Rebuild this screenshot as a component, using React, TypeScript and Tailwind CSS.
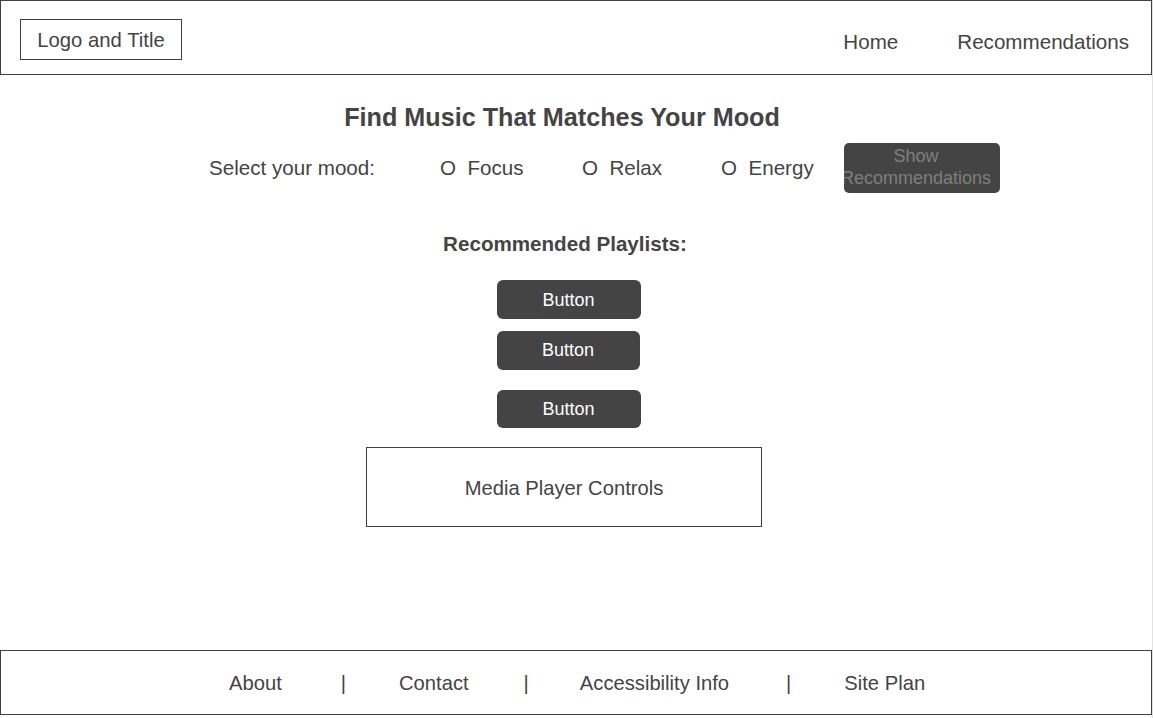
const footerLinks = [
  { label: 'About', bar: '' },
  { label: 'Contact', bar: 'ml-[59px] mr-[53px]' },
  { label: 'Accessibility Info', bar: 'ml-[55px] mr-[51px]' },
  { label: 'Site Plan', bar: 'ml-[57px] mr-[53px]' },
];

export default function App() {
  return (
    <div
      className="flex h-[718px] w-[1153px] flex-col border-r border-[#e2e2e2] bg-white text-[#444]"
      style={{ fontFamily: '"Liberation Sans", Arial, sans-serif' }}
    >
      {/* header */}
      <header className="flex h-[75px] items-start border border-[#404040]">
        <div className="ml-[19px] mt-[18px] flex h-[41px] w-[162px] items-center justify-center border border-[#404040] pt-[2px] text-[20.3px]">
          Logo and Title
        </div>
        <nav className="ml-auto mr-[22px] mt-[29px] flex gap-[59px] text-[20.6px] leading-[23px]">
          <span>Home</span>
          <span>Recommendations</span>
        </nav>
      </header>

      {/* main */}
      <main className="flex flex-1 flex-col">
        <h1 className="mt-[28px] w-[1124px] text-center text-[25.2px] font-bold leading-[28px]">
          Find Music That Matches Your Mood
        </h1>

        <div className="mt-[12px] flex items-center pl-[209px] text-[20.6px] leading-[23px]">
          <span className="mb-[2px] w-[166px] whitespace-nowrap">Select your mood:</span>
          <div className="mb-[2px] ml-[65px] flex">
            <span className="w-[142px] whitespace-pre">O  Focus</span>
            <span className="w-[139px] whitespace-pre">O  Relax</span>
            <span className="w-[123px] whitespace-pre">O  Energy</span>
          </div>
          <button className="flex h-[50px] w-[156px] flex-col items-center justify-center overflow-hidden rounded-[5px] bg-[#444] pb-[2px] pr-[12px] text-[18px] leading-[22px] text-[#7f7f7f]">
            <span className="whitespace-nowrap">Show</span>
            <span className="whitespace-nowrap">Recommendations</span>
          </button>
        </div>

        <div className="flex w-[1130px] flex-col items-center">
          <h2 className="mt-[39px] text-[20.6px] font-bold leading-[24px]">Recommended Playlists:</h2>
          <div className="ml-[7px] mt-[24px] flex flex-col">
            <button className="h-[39px] w-[144px] rounded-[6px] bg-[#444] pt-px text-[18px] text-white">Button</button>
            <button className="mt-[12px] h-[39px] w-[143px] rounded-[6px] bg-[#444] text-[18px] text-white">Button</button>
            <button className="mt-[20px] h-[38px] w-[144px] rounded-[6px] bg-[#444] text-[18px] text-white">Button</button>
          </div>
          <div className="ml-[-2px] mt-[19px] flex h-[80px] w-[396px] items-center justify-center border border-[#404040] pt-[2px] text-[20.2px]">
            Media Player Controls
          </div>
        </div>
      </main>

      {/* footer */}
      <footer className="mb-[3px] flex h-[65px] items-center border border-[#404040] pl-[228px] pt-[2px] text-[20.2px]">
        {footerLinks.map((l, i) => (
          <div key={l.label} className="flex items-center">
            {i > 0 && <span className={l.bar}>|</span>}
            <span className="whitespace-nowrap">{l.label}</span>
          </div>
        ))}
      </footer>
    </div>
  );
}
